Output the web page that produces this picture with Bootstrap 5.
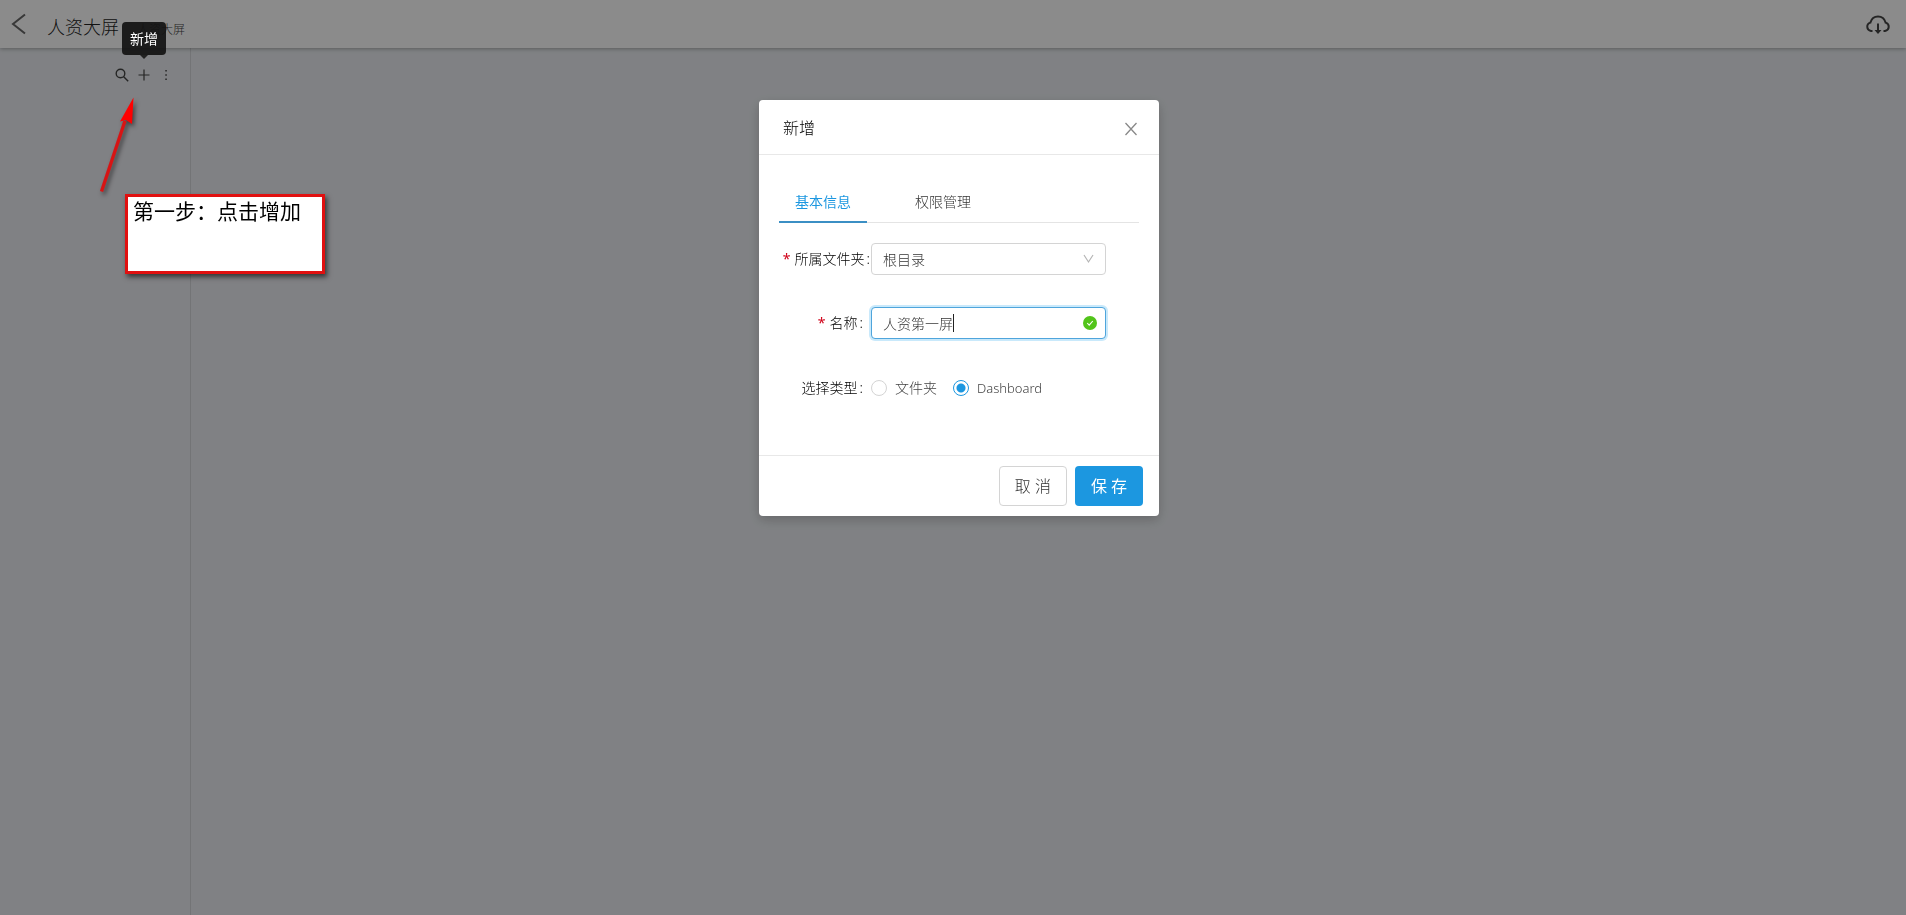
<!DOCTYPE html>
<html lang="zh-CN">
<head>
<meta charset="utf-8">
<meta name="viewport" content="width=device-width, initial-scale=1">
<title>人资大屏</title>
<link rel="stylesheet" href="https://cdn.jsdelivr.net/npm/bootstrap@5.3.0/dist/css/bootstrap.min.css">
<style>
  :root { --main: #1c97e0; }
  body { font: 300 14px/20px "Noto Sans", "Noto Sans CJK SC", sans-serif; color: #444; background: #e9ecf0; }
  .topbar { height: 48px; background: #fefefe; box-shadow: 0 1px 4px rgba(0,0,0,.3); z-index: 2; padding: 0 15px 0 11px; }
  .topbar .page-name { font-size: 18px; margin: 6px 18px 0 20px; color: #222; }
  .topbar .crumb { font-size: 12px; margin-top: 12px; }
  .plain { border: 0; background: none; padding: 0; color: inherit; display: flex; }
  .side { width: 191px; border-right: 1px solid #d2d4d8; color: #444; }
  .side .tools { gap: 8px; padding: 20px 17px 0 0; }
  .modal-backdrop { --bs-backdrop-opacity: .45; }
  .modal { padding-left: 12px; }
  .dialog { --bs-modal-width: 400px; margin-top: 100px; }
  .dialog .modal-content { border: 0; border-radius: 4px; box-shadow: 0 4px 12px rgba(0,0,0,.2); color: #444; }
  .dialog .modal-header { padding: 17px 21px 14px 24px; border-color: #e8e8e8; }
  .dialog .modal-title { font-size: 16px; line-height: 23px; font-weight: 300; color: #000; }
  .dialog .modal-body { padding: 28px 20px 51px; }
  .tabs { border-bottom: 1px solid #e4e4e4; gap: 32px; margin-bottom: 20px; }
  .tabs .nav-link { padding: 9px 16px 9px; color: #333; border: 0; border-bottom: 2px solid transparent; margin-bottom: -1px; background: none; border-radius: 0; }
  .tabs .nav-link.active { color: var(--main); border-color: #3b8fc4; font-weight: 400; }
  .field { height: 32px; margin-bottom: 32px; }
  .field-label { width: 92px; padding-right: 8px; color: #000; white-space: nowrap; display: flex; justify-content: flex-end; flex: none; }
  .field-label.tight { padding-right: 1px; }
  .field-label .colon { margin-left: 2px; }
  .star { color: #d00018; margin-right: 4px; font-weight: 400; }
  .box { width: 235px; }
  .box .form-control, .box .form-select { height: 32px; padding: 0 11px; border-radius: 4px; border-color: #d4d4d4; font-size: 14px; font-weight: 300; color: #333; background-image: none; }
  .box .form-control.editing { border-color: #4fa5dc; box-shadow: 0 0 0 2px #c9e9fb; }
  .mark-icon { position: absolute; right: 9px; top: 9px; pointer-events: none; }
  .select-icon { position: absolute; right: 12px; top: 11px; pointer-events: none; }
  .caret-bar { position: absolute; left: 82px; top: 7px; width: 1px; height: 18px; background: #222; }
  .kinds { margin-top: 33px; }
  .dot { appearance: none; width: 16px; height: 16px; margin: 0 8px 0 0; border: 1px solid #d4d4d4; border-radius: 50%; background: #fff; }
  .dot:checked { border-color: var(--main); background: radial-gradient(circle, var(--main) 4px, #fff 5px); }
  .latin { font-size: 13px; }
  .dialog .modal-footer { padding: 10px 16px; gap: 8px; border-color: #e8e8e8; }
  .dialog .modal-footer .btn { margin: 0; height: 40px; padding: 0 15px; font-size: 16px; font-weight: 300; border-radius: 4px; min-width: 68px; white-space: pre; }
  .dialog .modal-footer .btn-plain { border: 1px solid #d4d4d4; color: #333; background: #fff; }
  .dialog .modal-footer .btn-main { background: var(--main); color: #fff; border: 0; font-weight: 400; }
  .tip { position: absolute; left: 122px; top: 22px; z-index: 1060; background: rgba(18,18,18,.92); color: #fff; border-radius: 4px; padding: 7px 8px 6px; font-weight: 400; }
  .tip::after { content: ""; position: absolute; left: 50%; top: 100%; margin-left: -4px; border: 4px solid transparent; border-top-color: #222; border-bottom: 0; }
  .pointer-arrow { position: absolute; left: 94px; top: 92px; z-index: 1060; filter: drop-shadow(2px 3px 2px rgba(0,0,0,.5)); }
  .step-note { position: absolute; left: 125px; top: 194px; width: 200px; height: 80px; z-index: 1060; background: #fff; border: 3px solid #e01010; box-shadow: 2px 3px 5px rgba(0,0,0,.6); color: #000; font-size: 21px; line-height: 26px; font-weight: 400; padding: 1px 5px; white-space: nowrap; }
</style>
</head>
<body class="d-flex flex-column vh-100 overflow-hidden">
<header class="topbar d-flex align-items-center position-relative">
  <button class="plain" aria-label="返回"><svg width="16" height="22" viewBox="0 0 16 22" fill="none" stroke="#666" stroke-width="2"><path d="M14 1.500 2 11l12 9.500"/></svg></button>
  <span class="page-name">人资大屏</span>
  <span class="crumb">人资大屏</span>
  <button class="plain ms-auto" aria-label="下载"><svg width="26" height="24" viewBox="0 0 26 24" fill="none" stroke="#444" stroke-width="2"><path d="M7.500 19H6A4.300 4.300 0 0 1 5.400 10.600C6.500 6.600 9.500 4.500 13 4.500s6.500 2.100 7.600 6.100A4.300 4.300 0 0 1 20 19h-1.500"/><path d="M13 11.500V20"/><path d="m9.500 18 3.500 4 3.500-4z" fill="#444" stroke="none"/></svg></button>
</header>
<main class="d-flex flex-grow-1">
  <aside class="side">
    <div class="tools d-flex justify-content-end">
      <button class="plain" aria-label="搜索"><svg width="14" height="14" viewBox="0 0 14 14" fill="none" stroke="currentColor" stroke-width="1.400"><circle cx="5.500" cy="5.500" r="4.300"/><path d="m8.700 8.700 4.500 4.500"/></svg></button>
      <button class="plain" aria-label="新增"><svg width="14" height="14" viewBox="0 0 14 14" stroke="currentColor" stroke-width="1.200"><path d="M7 1.500v11M1.500 7h11"/></svg></button>
      <button class="plain" aria-label="更多"><svg width="14" height="14" viewBox="0 0 14 14" fill="currentColor"><path d="M6.300 2h1.500v1.500H6.300zM6.300 6.300h1.500v1.500H6.300zM6.300 10.600h1.500v1.500H6.300z"/></svg></button>
    </div>
  </aside>
  <section class="flex-grow-1"></section>
</main>

<div class="modal-backdrop show"></div>
<div class="modal d-block" role="dialog" aria-labelledby="dialogTitle">
  <div class="modal-dialog dialog">
    <form class="modal-content" onsubmit="return false">
      <div class="modal-header">
        <h5 class="modal-title" id="dialogTitle">新增</h5>
        <button type="button" class="plain" aria-label="关闭"><svg width="14" height="14" viewBox="0 0 14 14" stroke="#888" stroke-width="1.300"><path d="m1.500 1 11 12M12.500 1l-11 12"/></svg></button>
      </div>
      <div class="modal-body">
        <nav class="nav tabs">
          <button type="button" class="nav-link active">基本信息</button>
          <button type="button" class="nav-link">权限管理</button>
        </nav>
        <div class="field d-flex align-items-center">
          <label class="field-label tight" for="folder"><span class="star">*</span>所属文件夹<span class="colon">:</span></label>
          <div class="box position-relative">
            <select class="form-select" id="folder"><option>根目录</option></select>
            <svg class="select-icon" width="11" height="10" viewBox="0 0 11 10" fill="none" stroke="#b5b5b5" stroke-width="1.200"><path d="m1 1 4.500 7L10 1"/></svg>
          </div>
        </div>
        <div class="field d-flex align-items-center mb-0">
          <label class="field-label" for="screenName"><span class="star">*</span>名称<span class="colon">:</span></label>
          <div class="box position-relative">
            <input class="form-control editing" id="screenName" type="text" value="人资第一屏">
            <span class="caret-bar"></span>
            <svg class="mark-icon" width="14" height="14" viewBox="0 0 14 14"><circle cx="7" cy="7" r="7" fill="#52c41a"/><path d="m4.200 7 2 2.200L9.800 5" fill="none" stroke="#fff" stroke-width="1.100"/></svg>
          </div>
        </div>
        <div class="field kinds d-flex align-items-center mb-0" role="radiogroup" aria-label="选择类型">
          <span class="field-label">选择类型<span class="colon">:</span></span>
          <input class="dot" type="radio" name="kind" id="kindFolder"><label class="me-3" for="kindFolder">文件夹</label>
          <input class="dot" type="radio" name="kind" id="kindBoard" checked><label class="latin" for="kindBoard">Dashboard</label>
        </div>
      </div>
      <div class="modal-footer">
        <button type="button" class="btn btn-plain">取 消</button>
        <button type="submit" class="btn btn-main">保 存</button>
      </div>
    </form>
  </div>
</div>

<div class="tip" role="tooltip">新增</div>
<svg class="pointer-arrow" width="50" height="105" viewBox="0 0 50 105"><path d="M7.500 99.500 31 29" stroke="#d81414" stroke-width="3.400"/><path d="M39.500 5.500 26 29.500l6-1.500 6 4z" fill="#f00"/></svg>
<div class="step-note">第一步：点击增加</div>
<script src="https://cdn.jsdelivr.net/npm/bootstrap@5.3.0/dist/js/bootstrap.bundle.min.js"></script>
</body>
</html>
